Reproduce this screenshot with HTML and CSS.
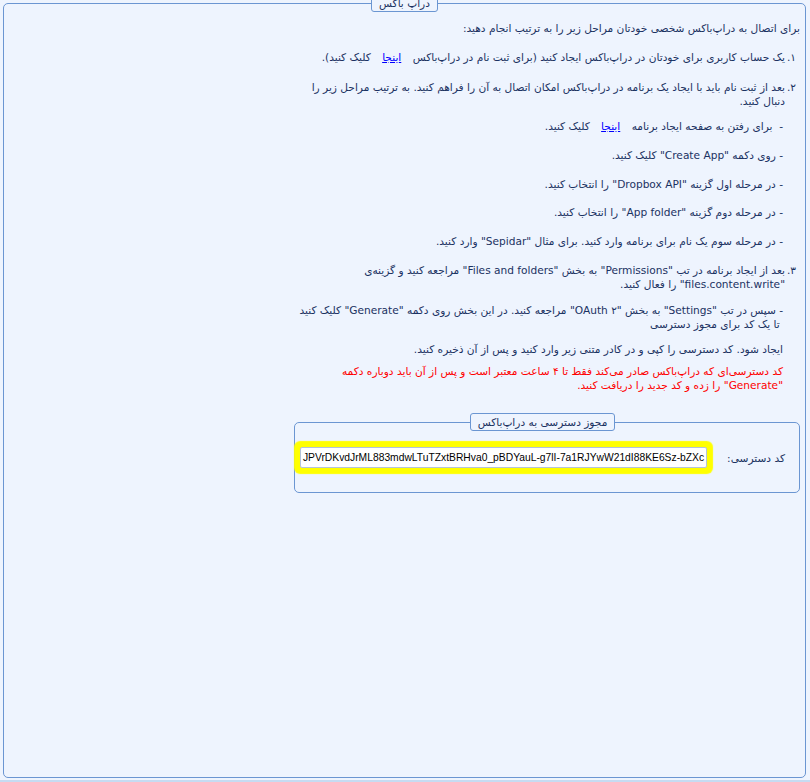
FILE: index.html
```html
<!DOCTYPE html>
<html lang="fa" dir="rtl">
<head>
<meta charset="utf-8">
<title>دراپ باکس</title>
<link rel="stylesheet" href="styles.css">
</head>
<body>
<fieldset class="panel">
  <legend class="panel-title">دراپ باکس</legend>
  <div class="content">
    <p class="intro">برای اتصال به دراپ‌باکس شخصی خودتان مراحل زیر را به ترتیب انجام دهید:</p>

    <div class="step step-1">
      <span class="num">۱.</span>
      <div class="step-body">یک حساب کاربری برای خودتان در دراپ‌باکس ایجاد کنید (برای ثبت نام در دراپ‌باکس <a class="link" href="#">اینجا</a> کلیک کنید).</div>
    </div>

    <div class="step step-2">
      <span class="num">۲.</span>
      <div class="step-body">بعد از ثبت نام باید با ایجاد یک برنامه در دراپ‌باکس امکان اتصال به آن را فراهم کنید. به ترتیب مراحل زیر را<br>دنبال کنید.</div>
    </div>

    <div class="substeps">
      <p class="sub sub-first">-&nbsp; برای رفتن به صفحه ایجاد برنامه <a class="link" href="#">اینجا</a> کلیک کنید.</p>
      <p class="sub">- روی دکمه "Create App" کلیک کنید.</p>
      <p class="sub">- در مرحله اول گزینه "Dropbox API" را انتخاب کنید.</p>
      <p class="sub sub-tight">- در مرحله دوم گزینه "App folder" را انتخاب کنید.</p>
      <p class="sub">- در مرحله سوم یک نام برای برنامه وارد کنید. برای مثال "Sepidar" وارد کنید.</p>
    </div>

    <div class="step step-3">
      <span class="num">۳.</span>
      <div class="step-body">بعد از ایجاد برنامه در تب "Permissions" به بخش "Files and folders" مراجعه کنید و گزینه‌ی<br>"files.content.write" را فعال کنید.</div>
    </div>

    <div class="substeps">
      <p class="sub note-1">- سپس در تب "Settings" به بخش "OAuth ۲" مراجعه کنید. در این بخش روی دکمه "Generate" کلیک کنید<br>&nbsp;تا یک کد برای مجوز دسترسی</p>
      <p class="sub note-2">ایجاد شود. کد دسترسی را کپی و در کادر متنی زیر وارد کنید و پس از آن ذخیره کنید.</p>
      <p class="sub warn">کد دسترسی‌ای که دراپ‌باکس صادر می‌کند فقط تا ۴ ساعت معتبر است و پس از آن باید دوباره دکمه<br>"Generate" را زده و کد جدید را دریافت کنید.</p>
    </div>

    <fieldset class="token-box">
      <legend class="token-title">مجوز دسترسی به دراپ‌باکس</legend>
      <div class="token-row">
        <label class="token-label" for="token">کد دسترسی:</label>
        <div class="token-input" id="token"><span class="token-value">JPVrDKvdJrML883mdwLTuTZxtBRHva0_pBDYauL-g7lI-7a1RJYwW21dI88KE6Sz-bZXc</span></div>
      </div>
    </fieldset>
  </div>
</fieldset>
<div class="bottom-strip"></div>
</body>
</html>
```

FILE: styles.css
```css
html, body {
  margin: 0;
  padding: 0;
}
html {
  background: #eef4fe;
}
body {
  height: 782px;
  overflow: hidden;
  font-family: "DejaVu Sans", sans-serif;
  font-size: 10.6px;
  line-height: 14px;
  color: #1b3262;
  background: #eef4fe;
}
.panel {
  box-sizing: border-box;
  margin: -6px 4px 0 3px;
  height: 784px;
  padding: 9px 5px 0 5px;
  border: 1px solid #6b96d2;
  border-radius: 5px;
  min-inline-size: 0;
}
.panel-title {
  margin: 0 auto;
  box-sizing: border-box;
  height: 18px;
  padding: 0 7px;
  line-height: 16px;
  border: 1px solid #6b96d2;
  border-radius: 3px;
  background: #eef4fe;
  color: #1b3262;
}
.content {
  width: 506px;
  margin-right: 0;
  margin-left: auto;
}
p {
  margin: 0;
}
.intro {
  margin: 0;
}
.step {
  display: flex;
  margin-top: 15px;
}
.step-2 { margin-top: 16px; }
.num {
  flex: none;
  width: 15px;
  padding-right: 4px;
  box-sizing: border-box;
}
.step-body {
  flex: 1;
  white-space: nowrap;
}
.substeps {
  padding-right: 17px;
}
.sub {
  margin-top: 15px;
  white-space: nowrap;
}
.sub-first { margin-top: 11px; }
.sub-tight { margin-top: 14px; }
.note-1 { margin-top: 12px; }
.note-2 { margin-top: 11px; }
.warn {
  margin-top: 8px;
  color: #ff0000;
}
.link {
  color: #0000ff;
  text-decoration: underline;
  margin: 0 8px;
}
.token-box {
  margin: 21px 0 0 0;
  padding: 16px 14px 24px 5px;
  border: 1px solid #6b96d2;
  border-radius: 5px;
  min-inline-size: 0;
}
.token-title {
  margin: 0 auto;
  box-sizing: border-box;
  height: 18px;
  padding: 0 7px;
  line-height: 16px;
  border: 1px solid #6b96d2;
  border-radius: 3px;
  background: #eef4fe;
}
.token-row {
  display: flex;
  align-items: center;
  gap: 20px;
}
.token-label {
  flex: none;
}
.token-input {
  flex: 1;
  min-width: 0;
  box-sizing: border-box;
  height: 21px;
  border: 1px solid #b3c3da;
  border-radius: 2px;
  background: #ffffff;
  box-shadow: 0 0 1px 6px #ffff00;
  direction: ltr;
  display: flex;
  justify-content: flex-end;
  align-items: center;
  overflow: hidden;
  padding: 0 2px;
}
.token-value {
  flex: none;
  white-space: nowrap;
  font-family: "Liberation Sans", sans-serif;
  font-size: 10.3px;
  color: #000000;
}
.bottom-strip {
  position: absolute;
  left: 0;
  right: 0;
  top: 780px;
  height: 2px;
  background: #c6dbf2;
}
```
